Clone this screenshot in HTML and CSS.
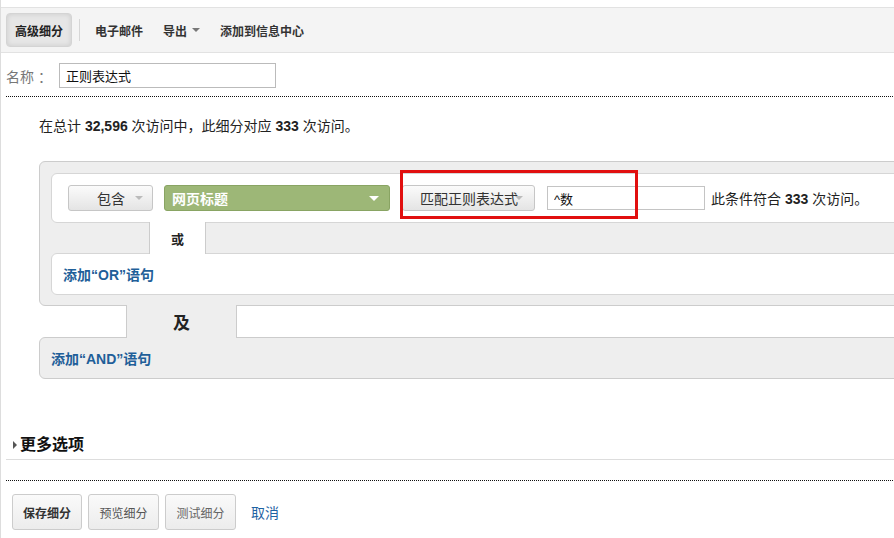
FILE: index.html
```html
<!DOCTYPE html>
<html lang="zh-CN">
<head>
    <meta charset="UTF-8">
    <title>高级细分</title>
    <link rel="stylesheet" href="styles.css">
</head>
<body>
<div class="page">
    <div class="toolbar">
        <button class="tool-btn">高级细分</button>
        <span class="tool-sep"></span>
        <a class="tool-link">电子邮件</a>
        <a class="tool-link">导出 <span class="caret"></span></a>
        <a class="tool-link">添加到信息中心</a>
    </div>

    <div class="name-row">
        <label class="name-label">名称 ：</label>
        <input class="name-input" type="text" value="正则表达式">
    </div>
    <div class="dotted"></div>

    <p class="summary">在总计 <b>32,596</b> 次访问中，此细分对应 <b>333</b> 次访问。</p>

    <div class="segment">
        <div class="condition">
            <button class="sel-btn include">包含 <span class="caret light"></span></button>
            <button class="dim-select">网页标题 <span class="caret white"></span></button>
            <button class="sel-btn match">匹配正则表达式<span class="caret light"></span></button>
            <input class="value-input" type="text" value="^数">
            <span class="match-count">此条件符合 <b>333</b> 次访问。</span>
            <div class="highlight"></div>
        </div>
        <div class="or-tab">或</div>
        <div class="add-or"><a class="add-link">添加“OR”语句</a></div>
    </div>
    <div class="and-tab">及</div>
    <div class="add-and"><a class="add-link">添加“AND”语句</a></div>

    <div class="more-options">
        <span class="arrow-right"></span>更多选项
    </div>
    <div class="dotted lower"></div>

    <div class="actions">
        <button class="act-btn primary">保存细分</button>
        <button class="act-btn">预览细分</button>
        <button class="act-btn faint">测试细分</button>
        <a class="cancel">取消</a>
    </div>
</div>
</body>
</html>
```

FILE: styles.css
```css
html, body {
    margin: 0;
    background: #fff;
    overflow: hidden;
}

body {
    font-family: "Liberation Sans", Arial, "Noto Sans CJK SC", sans-serif;
    color: #222;
    font-size: 13px;
}

.page {
    border-left: 1px solid #ddd;
    padding-top: 7px;
    min-height: 531px;
}

/* toolbar */
.toolbar {
    height: 44px;
    background: #f4f4f4;
    border-top: 1px solid #e2e2e2;
    border-bottom: 1px solid #e2e2e2;
    display: flex;
    align-items: center;
    padding-left: 5px;
}

.tool-btn {
    width: 66px;
    height: 34px;
    border: 1px solid #d4d4d4;
    border-radius: 4px;
    background: #e6e6e6;
    box-shadow: inset 0 0 5px rgba(0,0,0,0.12);
    font: bold 12px "Liberation Sans", "Noto Sans CJK SC", sans-serif;
    color: #222;
    padding: 0;
}

.tool-sep {
    width: 1px;
    height: 22px;
    background: #d6d6d6;
    margin: 0 15px 0 7px;
}

.tool-link {
    font-weight: bold;
    font-size: 12px;
    color: #333;
    margin-right: 20px;
    display: flex;
    align-items: center;
}

.caret {
    display: inline-block;
    width: 0;
    height: 0;
    border-left: 4px solid transparent;
    border-right: 4px solid transparent;
    border-top: 4px solid #777;
    margin-left: 5px;
}

.caret.light {
    border-top-color: #bbb;
}

.caret.white {
    border-top-color: #fff;
    border-left-width: 5px;
    border-right-width: 5px;
    border-top-width: 5px;
}

/* name */
.name-row {
    display: flex;
    align-items: center;
    margin: 10px 0 0 5px;
}

.name-label {
    font-size: 14px;
    color: #777;
    width: 53px;
    white-space: nowrap;
}

.name-input {
    width: 217px;
    height: 25px;
    box-sizing: border-box;
    border: 1px solid #bbb;
    padding: 0 6px;
    font: 13px "Liberation Sans", "Noto Sans CJK SC", sans-serif;
    color: #111;
}

.dotted {
    border-top: 1px dotted #111;
    margin: 8px 1px 0 5px;
}

.dotted.lower {
    margin-top: 20px;
}

.summary {
    margin: 20px 0 0 38px;
    line-height: 18px;
    font-size: 14px;
}

/* segment builder */
.segment {
    margin: 26px -20px 0 38px;
    background: #eee;
    border: 1px solid #ccc;
    border-radius: 6px;
    padding: 11px 0 10px 11px;
}

.condition {
    position: relative;
    background: #fff;
    border: 1px solid #d6d6d6;
    border-radius: 6px;
    height: 48px;
    padding-left: 16px;
    display: flex;
    align-items: center;
    font-size: 14px;
}

.sel-btn {
    height: 26px;
    border: 1px solid #c6c6c6;
    border-radius: 3px;
    background: linear-gradient(#fbfbfb, #e4e4e4);
    font: 14px "Liberation Sans", "Noto Sans CJK SC", sans-serif;
    color: #333;
    display: flex;
    align-items: center;
}

.sel-btn.include {
    width: 85px;
    padding-left: 28px;
}

.sel-btn.include .caret {
    margin-left: 10px;
}

.sel-btn.match {
    width: 133px;
    padding-left: 17px;
    margin-left: 12px;
}

.sel-btn.match .caret {
    margin-left: -3px;
}

.dim-select {
    width: 226px;
    height: 26px;
    margin-left: 11px;
    background: #9db777;
    border: 1px solid #89a463;
    border-radius: 3px;
    color: #fff;
    font: bold 14px "Liberation Sans", "Noto Sans CJK SC", sans-serif;
    display: flex;
    align-items: center;
    justify-content: space-between;
    padding: 0 10px 0 7px;
}

.value-input {
    width: 158px;
    height: 24px;
    box-sizing: border-box;
    margin-left: 12px;
    border: 1px solid #c4c4c4;
    padding: 0 6px;
    font: 13px "Liberation Sans", "Noto Sans CJK SC", sans-serif;
    color: #111;
}

.match-count {
    margin-left: 6px;
    white-space: nowrap;
}

.highlight {
    position: absolute;
    left: 348px;
    top: -4px;
    width: 238px;
    height: 49px;
    box-sizing: border-box;
    border: 3px solid #e10f0f;
}

.or-tab {
    position: relative;
    z-index: 1;
    width: 55px;
    height: 32px;
    margin: -1px 0 -1px 98px;
    background: #fff;
    border-left: 1px solid #ccc;
    border-right: 1px solid #ccc;
    font-weight: bold;
    font-size: 13px;
    display: flex;
    align-items: center;
    justify-content: center;
}

.add-or {
    background: #fff;
    border: 1px solid #d6d6d6;
    border-radius: 6px;
    height: 40px;
    padding-left: 11px;
    display: flex;
    align-items: center;
}

.add-link {
    color: #1f5f99;
    font-weight: bold;
    font-size: 14px;
}

.and-tab {
    position: relative;
    z-index: 1;
    width: 109px;
    height: 33px;
    margin: -1px 0 -1px 125px;
    background: #eee;
    border-left: 1px solid #ccc;
    border-right: 1px solid #ccc;
    font-weight: bold;
    font-size: 17px;
    display: flex;
    align-items: center;
    justify-content: center;
}

.add-and {
    margin: 0 -20px 0 38px;
    background: #eee;
    border: 1px solid #ccc;
    border-radius: 6px;
    height: 40px;
    padding-left: 11px;
    display: flex;
    align-items: center;
}

/* more options */
.more-options {
    margin: 55px 0 0 5px;
    padding: 0 0 3px 7px;
    line-height: 22px;
    border-bottom: 1px solid #ddd;
    font-weight: bold;
    font-size: 16px;
    color: #111;
    display: flex;
    align-items: center;
}

.arrow-right {
    width: 0;
    height: 0;
    border-top: 4px solid transparent;
    border-bottom: 4px solid transparent;
    border-left: 4px solid #555;
    margin-right: 3px;
}

/* bottom actions */
.actions {
    display: flex;
    align-items: center;
    gap: 6px;
    margin: 13px 0 0 11px;
}

.act-btn {
    width: 71px;
    height: 36px;
    border: 1px solid #ccc;
    border-radius: 3px;
    background: linear-gradient(#fafafa, #ececec);
    font: 12px "Liberation Sans", "Noto Sans CJK SC", sans-serif;
    color: #555;
    padding: 0;
}

.act-btn.primary {
    width: 70px;
    font-weight: bold;
    color: #333;
}

.act-btn.faint {
    color: #666;
}

.cancel {
    margin-left: 9px;
    color: #1f63a3;
    font-size: 14px;
}
```
